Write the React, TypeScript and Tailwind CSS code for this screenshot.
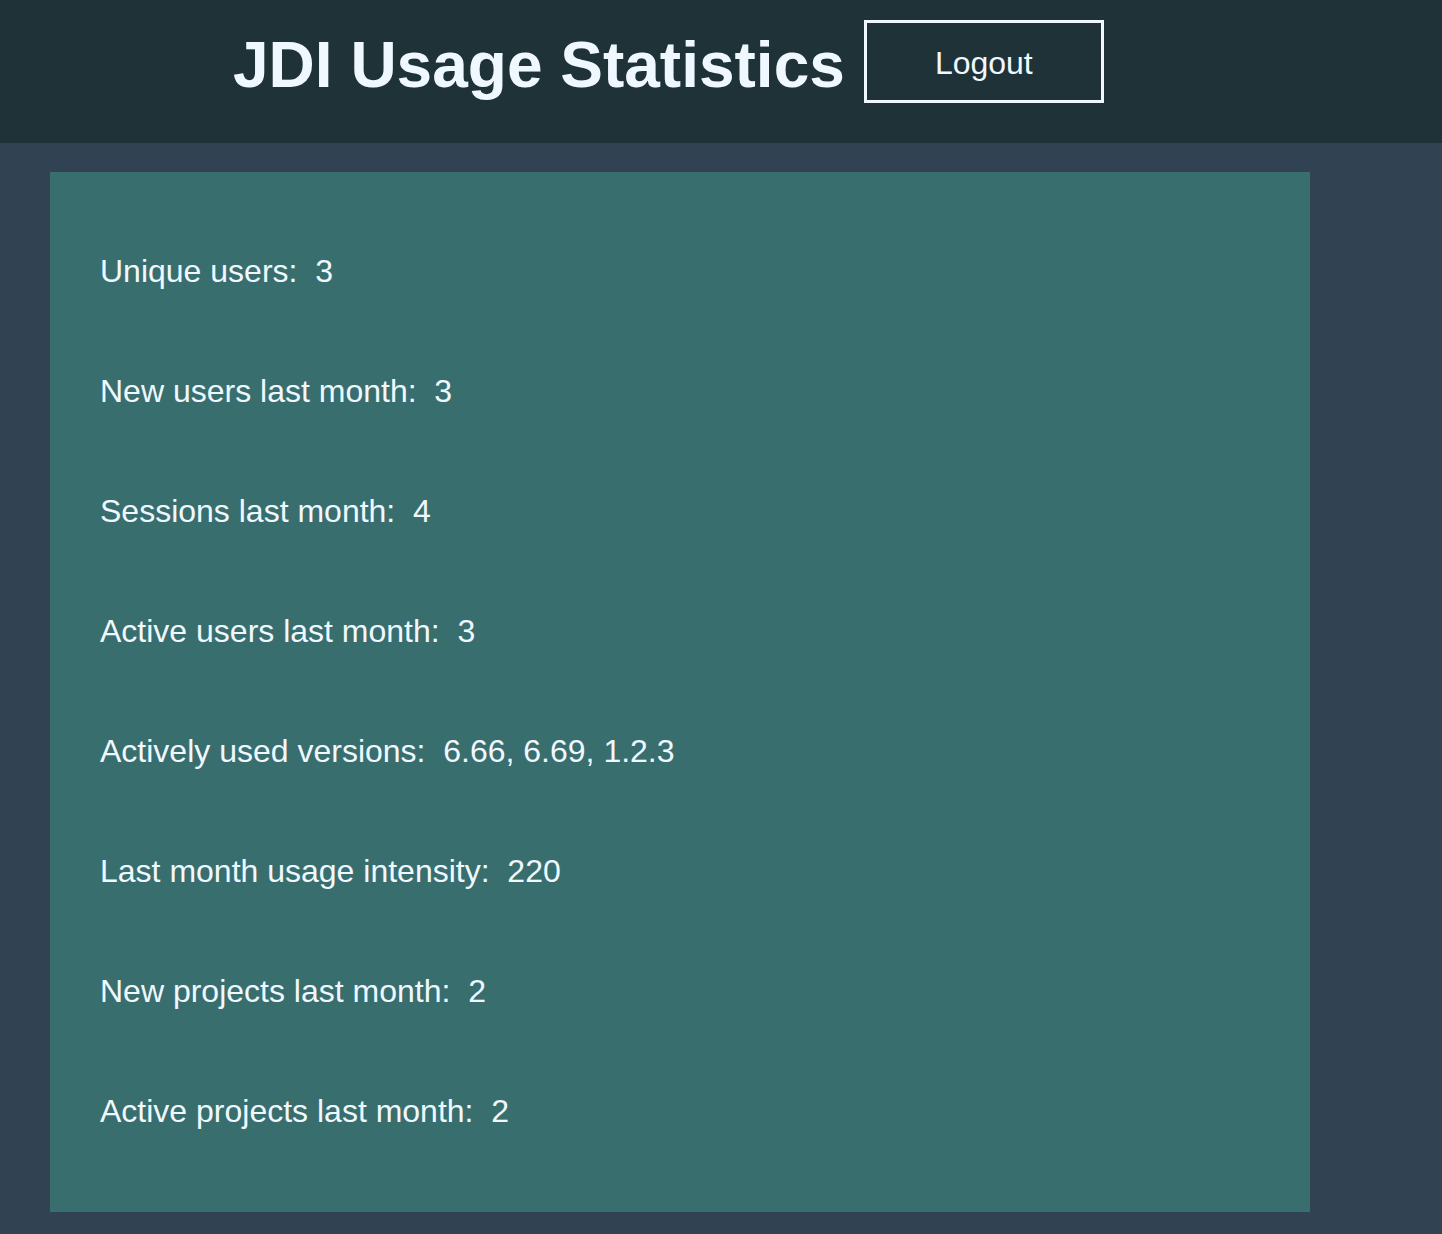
const stats: [string, string][] = [
  ["Unique users:", "3"],
  ["New users last month:", "3"],
  ["Sessions last month:", "4"],
  ["Active users last month:", "3"],
  ["Actively used versions:", "6.66, 6.69, 1.2.3"],
  ["Last month usage intensity:", "220"],
  ["New projects last month:", "2"],
  ["Active projects last month:", "2"],
];

export default function App() {
  return (
    <div className="min-h-[1234px] bg-[#314352] font-['Liberation_Sans',Arial,sans-serif] text-[#f0f8ff]">
      <header className="h-[143px] bg-[#1f3237] flex items-start pt-[20px] pl-[233px]">
        <h1 className="text-[64px] font-bold leading-[83px] mt-[4px]">JDI Usage Statistics</h1>
        <button className="ml-[19px] w-[240px] h-[83px] border-[3px] border-[#f0f8ff] text-[32px] leading-none text-[#f0f8ff] pt-[2px]">
          Logout
        </button>
      </header>
      <main className="pt-[29px] pl-[50px]">
        <div className="w-[1260px] bg-[#396e6e] pt-[39px] pb-[41px] pl-[50px]">
          {stats.map(([label, value]) => (
            <div key={label} className="h-[120px] text-[32px] leading-[120px] whitespace-pre">
              {label + "  " + value}
            </div>
          ))}
        </div>
      </main>
    </div>
  );
}
